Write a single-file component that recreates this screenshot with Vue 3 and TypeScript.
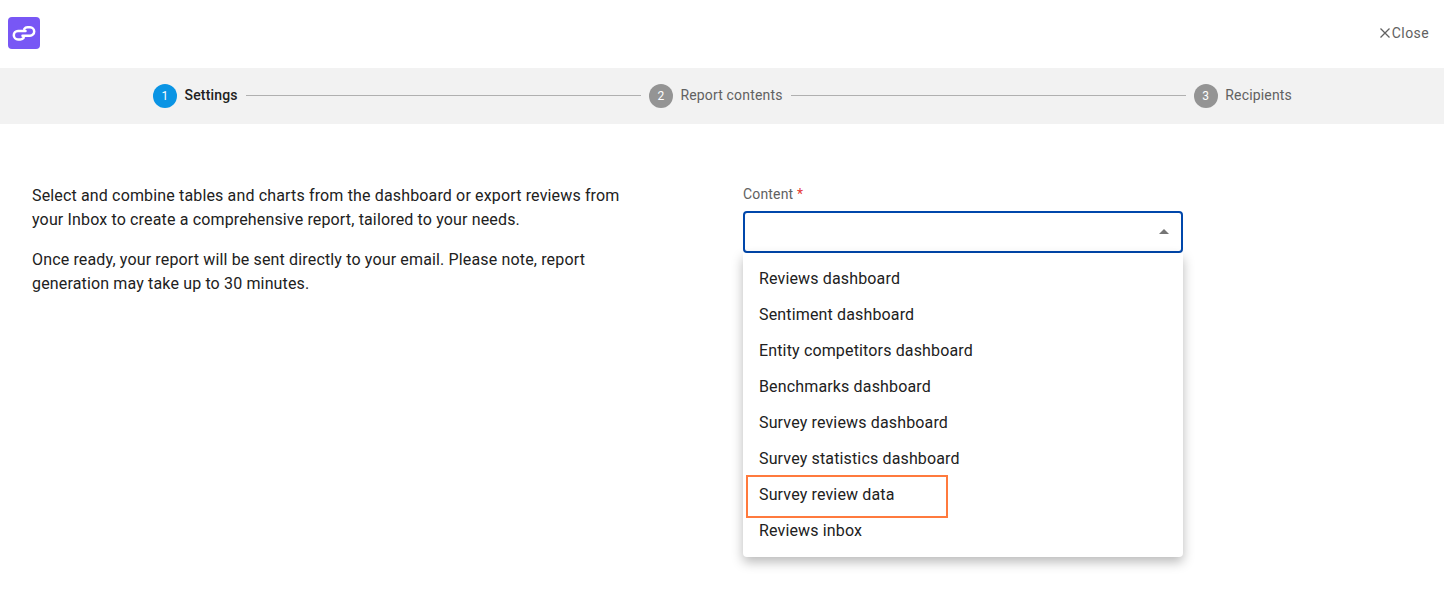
<script setup lang="ts">
const steps = [
  { n: 1, label: 'Settings', active: true },
  { n: 2, label: 'Report contents', active: false },
  { n: 3, label: 'Recipients', active: false },
]

const options = [
  'Reviews dashboard',
  'Sentiment dashboard',
  'Entity competitors dashboard',
  'Benchmarks dashboard',
  'Survey reviews dashboard',
  'Survey statistics dashboard',
  'Survey review data',
  'Reviews inbox',
]
</script>

<template>
  <div class="page">
    <header class="topbar">
      <div class="logo">
        <svg viewBox="0 0 32 32" width="32" height="32">
          <rect width="32" height="32" rx="4" fill="#7857f5" />
          <path
            d="M17.5 14H10a4.2 4.2 0 0 0 0 8.4h2.5c1.5 0 2.5-.6 3.2-1.6M14.5 18.7H22a4.2 4.2 0 0 0 0-8.4h-2.5c-1.5 0-2.5.6-3.2 1.6"
            fill="none"
            stroke="#fff"
            stroke-width="2.5"
            stroke-linecap="round"
          />
        </svg>
      </div>
      <button class="close">
        <svg viewBox="0 0 10 10" width="10" height="10">
          <path d="M0.5 0.5L9.5 9.5M9.5 0.5L0.5 9.5" stroke="#616161" stroke-width="1.3" fill="none" />
        </svg>
        <span>Close</span>
      </button>
    </header>

    <nav class="stepper">
      <template v-for="(s, i) in steps" :key="s.n">
        <div class="line" v-if="i > 0"></div>
        <div class="step" :class="{ active: s.active }">
          <span class="num">{{ s.n }}</span>
          <span class="label">{{ s.label }}</span>
        </div>
      </template>
    </nav>

    <main class="body">
      <div class="intro">
        <p>Select and combine tables and charts from the dashboard or export reviews from your Inbox to create a comprehensive report, tailored to your needs.</p>
        <p>Once ready, your report will be sent directly to your email. Please note, report generation may take up to 30 minutes.</p>
      </div>

      <div class="field">
        <label class="field-label">Content <span class="req">*</span></label>
        <div class="select">
          <span class="caret"></span>
          <ul class="menu">
            <li v-for="o in options" :key="o">{{ o }}</li>
          </ul>
          <div class="callout"></div>
        </div>
      </div>
    </main>
  </div>
</template>

<style scoped>
.page {
  width: 1444px;
  height: 600px;
  overflow: hidden;
  background: #fff;
  font-family: Roboto, "Liberation Sans", sans-serif;
  color: #212121;
}

.topbar {
  height: 68px;
  display: flex;
  align-items: center;
  justify-content: space-between;
  padding: 0 15px 2px 8px;
  box-sizing: border-box;
}

.logo {
  width: 32px;
  height: 32px;
}

.logo svg {
  display: block;
}

.close {
  display: flex;
  align-items: center;
  gap: 2px;
  padding: 0;
  border: 0;
  background: none;
  font: inherit;
  font-size: 14px;
  letter-spacing: 0.4px;
  color: #616161;
}

.stepper {
  height: 56px;
  background: #f2f2f2;
  display: flex;
  align-items: center;
  gap: 8px;
  padding: 0 152px 0 153px;
}

.line {
  flex: 1;
  height: 1px;
  margin-top: -1px;
  background: #b0b0b0;
}

.step {
  display: flex;
  align-items: center;
  gap: 7.5px;
  font-size: 14px;
  letter-spacing: 0.17px;
  color: #616161;
}

.label {
  margin-top: -2px;
}

.step.active {
  color: #212121;
  font-weight: 500;
}

.num {
  width: 24px;
  height: 24px;
  border-radius: 50%;
  background: #949494;
  color: #fff;
  font-size: 12px;
  font-weight: 400;
  display: flex;
  align-items: center;
  justify-content: center;
}

.step.active .num {
  background: #0a94e4;
}

.body {
  display: grid;
  grid-template-columns: 600px 440px;
  column-gap: 111px;
  padding: 60px 0 0 32px;
}

.intro {
  font-size: 16px;
  line-height: 24px;
  letter-spacing: 0.15px;
  color: #212121;
}

.intro p {
  margin: 0 0 16px;
}

.field-label {
  display: block;
  font-size: 14px;
  line-height: 20px;
  letter-spacing: 0.17px;
  color: #616161;
  margin-bottom: 7px;
}

.req {
  color: #e53935;
}

.select {
  position: relative;
  height: 42px;
  box-sizing: border-box;
  border: 2px solid #0047ab;
  border-radius: 4px;
}

.caret {
  position: absolute;
  right: 12px;
  top: 16px;
  border-left: 5px solid transparent;
  border-right: 5px solid transparent;
  border-bottom: 5px solid #757575;
}

.menu {
  position: absolute;
  left: -2px;
  right: -2px;
  top: 40px;
  margin: 0;
  padding: 8px 0;
  list-style: none;
  background: #fff;
  border-radius: 0 0 4px 4px;
  box-shadow: 0 5px 12px rgba(0, 0, 0, 0.28);
}

.menu li {
  height: 36px;
  line-height: 36px;
  padding: 0 16px;
  font-size: 16px;
  letter-spacing: 0.15px;
  color: #212121;
}

.callout {
  position: absolute;
  left: 1px;
  top: 262px;
  width: 202px;
  height: 43px;
  box-sizing: border-box;
  border: 2px solid #ff7a3d;
}
</style>

<style>
html,
body {
  background: #fff;
}
</style>
